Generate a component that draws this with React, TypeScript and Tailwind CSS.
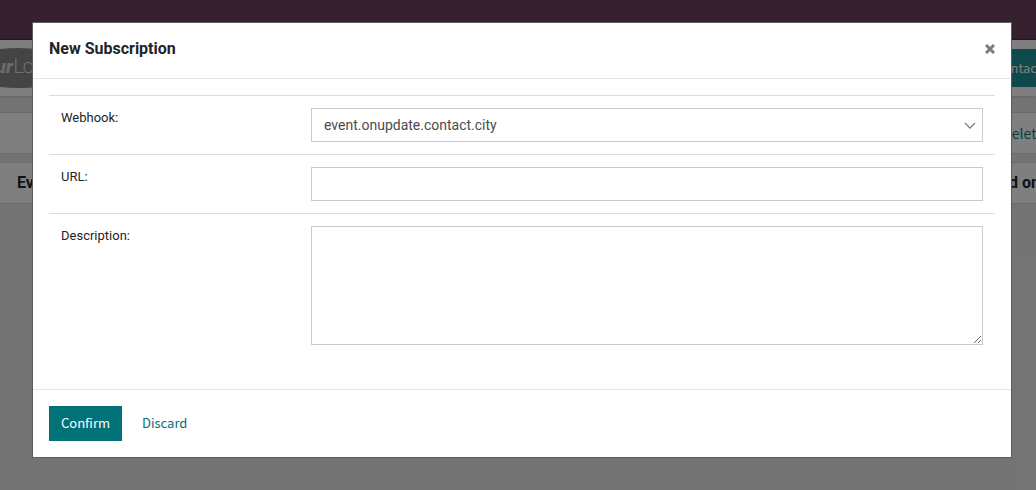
import type { ReactNode } from 'react';

const control =
  'block w-full rounded-none border border-[#c9cccf] bg-white px-3 text-sm text-[#4c4c4c] outline-none';

function Field({ id, label, children }: { id: string; label: string; children: ReactNode }) {
  return (
    <div className="flex border-t border-[#dadcde] px-3 py-3">
      <label htmlFor={id} className="w-[250px] shrink-0 text-[13px] leading-5 text-[#212529]">
        {label}
      </label>
      <div className="min-w-0 flex-1">{children}</div>
    </div>
  );
}

function Logo() {
  return (
    <svg width="124" height="42" viewBox="0 0 124 42" className="-ml-11 shrink-0" aria-label="YourLogo">
      <ellipse cx="62" cy="21" rx="61" ry="20" fill="#888888" />
      <text
        x="57"
        y="26"
        textAnchor="end"
        fontSize="19"
        fontWeight="900"
        fontStyle="italic"
        fontFamily="Roboto, sans-serif"
        fill="#d6d6d6"
      >
        Your
      </text>
      <text x="57" y="26" fontSize="21" fontWeight="300" fontFamily="Lato, sans-serif" fill="#e4e4e4">
        Logo
      </text>
    </svg>
  );
}

function Backdrop() {
  return (
    <div className="min-h-screen bg-[#e7e7e7]" aria-hidden="true">
      <div className="h-10 border-b border-[#4b2b42] bg-[#68435b]" />
      <div className="flex h-14 items-center justify-between overflow-hidden bg-white shadow">
        <Logo />
        <div className="-mr-10 bg-[#209296] px-4 py-2 font-['Noto_Sans_CJK_JP','Noto_Sans',sans-serif] text-[13px] leading-[22px] text-white">
          Contact Us
        </div>
      </div>
      <div className="mt-4 flex h-[42px] items-center justify-end overflow-hidden border-y border-[#d4d7db] bg-white">
        <span className="-mr-2 font-['Noto_Sans_CJK_JP','Noto_Sans',sans-serif] text-sm text-[#017e84]">Delete</span>
      </div>
      <div className="mt-2 flex h-[42px] items-center justify-between overflow-hidden border-y border-[#d4d7db] bg-white pl-[17px] text-base font-bold text-[#212529]">
        <span>Event</span>
        <span className="-mr-1">Created on</span>
      </div>
    </div>
  );
}

export default function App() {
  return (
    <div className="relative min-h-screen overflow-hidden font-[Roboto,sans-serif]">
      <Backdrop />
      <div className="absolute inset-0 bg-black/50 pt-[22px] pr-6 pl-8">
        <form
          role="dialog"
          aria-labelledby="dialog-title"
          onSubmit={(event) => event.preventDefault()}
          className="border border-[#5c5c5c] bg-white"
        >
          <header className="flex h-14 items-center justify-between border-b border-[#e4e6e8] px-4 pb-[3px]">
            <h1 id="dialog-title" className="text-base leading-6 font-bold text-[#212529]">
              New Subscription
            </h1>
            <button type="button" aria-label="Close" className="flex h-6 w-[10px] items-center justify-center">
              <svg width="10" height="10" viewBox="0 0 10 10" stroke="#7d7d7d" strokeWidth="3">
                <path d="M1 1 9 9M9 1 1 9" />
              </svg>
            </button>
          </header>
          <div className="px-4 pt-4 pb-8">
            <Field id="webhook" label="Webhook:">
              <div className="relative">
                <select id="webhook" className={`${control} h-[34px] appearance-none`}>
                  <option>event.onupdate.contact.city</option>
                </select>
                <svg
                  width="12"
                  height="8"
                  viewBox="0 0 12 8"
                  fill="none"
                  stroke="#7d7d7d"
                  strokeWidth="1.3"
                  className="pointer-events-none absolute top-[14px] right-[7px]"
                >
                  <path d="M1 1 6 6 11 1" />
                </svg>
              </div>
            </Field>
            <Field id="url" label="URL:">
              <input id="url" type="text" className={`${control} h-[34px]`} />
            </Field>
            <Field id="description" label="Description:">
              <textarea id="description" className={`${control} h-[119px] resize-y py-2`} />
            </Field>
          </div>
          <footer className="flex items-center gap-2 border-t border-[#e4e6e8] p-4 font-['Noto_Sans_CJK_JP','Noto_Sans',sans-serif] text-[13px]">
            <button type="submit" className="h-[35px] bg-[#017278] px-3 pb-0.5 text-white">
              Confirm
            </button>
            <button type="button" className="h-[35px] px-3 pb-0.5 text-[#017278]">
              Discard
            </button>
          </footer>
        </form>
      </div>
    </div>
  );
}
